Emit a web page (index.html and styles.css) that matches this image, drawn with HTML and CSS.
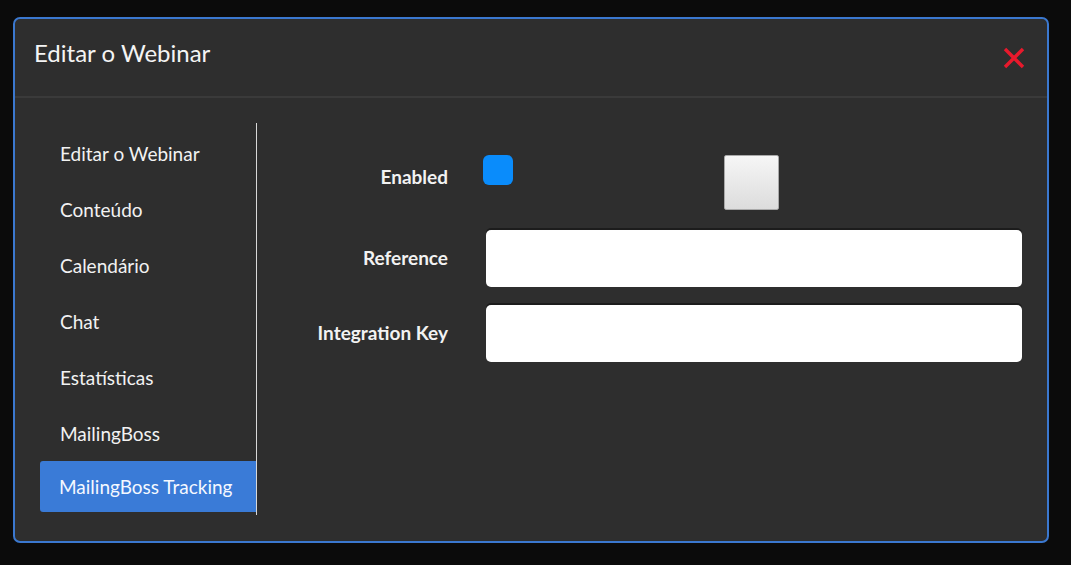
FILE: index.html
```html
<!DOCTYPE html>
<html lang="pt">
<head>
<meta charset="utf-8">
<title>Editar o Webinar</title>
<link rel="stylesheet" href="styles.css">
</head>
<body>
<div class="page">
  <div class="modal">
    <div class="modal-header">
      <h1 class="modal-title">Editar o Webinar</h1>
      <button class="close" aria-label="Fechar">
        <svg width="22" height="22" viewBox="0 0 22 22"><path d="M2 2 L20 20 M20 2 L2 20" stroke="#e8192c" stroke-width="3.4" stroke-linecap="butt"/></svg>
      </button>
    </div>
    <div class="modal-body">
      <nav class="sidebar">
        <a class="nav-item">Editar o Webinar</a>
        <a class="nav-item">Conteúdo</a>
        <a class="nav-item">Calendário</a>
        <a class="nav-item">Chat</a>
        <a class="nav-item">Estatísticas</a>
        <a class="nav-item">MailingBoss</a>
        <a class="nav-item active">MailingBoss Tracking</a>
      </nav>
      <div class="form">
        <div class="row row-enabled">
          <label class="label label-top">Enabled</label>
          <div class="control control-enabled">
            <span class="checkbox"></span>
            <span class="toggle"></span>
          </div>
        </div>
        <div class="row">
          <label class="label">Reference</label>
          <div class="control"><input class="input" type="text"></div>
        </div>
        <div class="row">
          <label class="label">Integration Key</label>
          <div class="control"><input class="input" type="text"></div>
        </div>
      </div>
    </div>
  </div>
</div>
</body>
</html>
```

FILE: styles.css
```css
* { box-sizing: border-box; }
html, body { margin: 0; padding: 0; }
body {
  background: #0b0b0b;
  font-family: Lato, "Open Sans", "Liberation Sans", sans-serif;
  color: #ffffff;
  width: 1071px;
  height: 565px;
  overflow: hidden;
}
.page {
  padding: 17px 0 0 13px;
}
.modal {
  width: 1036px;
  height: 526px;
  border: 2px solid #3b78cf;
  border-radius: 7px;
  background: #2e2e2e;
  display: flex;
  flex-direction: column;
}
.modal-header {
  height: 79px;
  border-bottom: 2px solid #3a3a3a;
  display: flex;
  align-items: center;
  justify-content: space-between;
  padding: 0 22px 0 19px;
}
.modal-title {
  margin: 0;
  font-size: 24px;
  font-weight: 400;
  color: #f4f4f4;
  position: relative;
  top: -5px;
}
.close {
  background: none;
  border: 0;
  padding: 0;
  width: 22px;
  height: 22px;
  display: block;
}
.close svg { display: block; }
.modal-body {
  display: flex;
  flex: 1;
  padding: 25px 0 0 25px;
}
.sidebar {
  width: 217px;
  height: 392px;
  border-right: 1px solid #d8d8d8;
  display: flex;
  flex-direction: column;
  padding-top: 2px;
}
.nav-item {
  display: flex;
  align-items: center;
  height: 56px;
  padding-left: 20px;
  font-size: 19px;
  color: #f2f2f2;
}
.nav-item.active {
  height: 51px;
  margin-top: 0;
  background: #3a7bd7;
  border-radius: 3px 0 0 3px;
  padding-left: 19px;
  color: #f4f8ff;
}
.form {
  flex: 1;
  padding-top: 32px;
  display: flex;
  flex-direction: column;
  gap: 18px;
}
.row {
  display: grid;
  grid-template-columns: 191px 536px;
  column-gap: 38px;
  align-items: center;
}
.row-enabled {
  align-items: start;
  height: 57px;
}
.label {
  text-align: right;
  font-size: 19px;
  font-weight: 700;
  color: #f2f2f2;
  padding-bottom: 3px;
}
.label-top {
  line-height: 44px;
  padding-bottom: 0;
}
.control-enabled {
  display: flex;
  align-items: flex-start;
  margin-left: -3px;
}
.checkbox {
  width: 30px;
  height: 30px;
  background: #0a8cfb;
  border-radius: 6px;
  display: block;
}
.toggle {
  width: 55px;
  height: 55px;
  margin-left: 211px;
  background: linear-gradient(#f6f6f6, #dcdcdc);
  border: 1px solid #a9a9a9;
  border-radius: 2px;
  display: block;
}
.input {
  display: block;
  width: 536px;
  height: 57px;
  border: 0;
  border-radius: 5px;
  background: #ffffff;
  box-shadow: 0 -2px 0 #1c1c1c;
  outline: none;
}
```
